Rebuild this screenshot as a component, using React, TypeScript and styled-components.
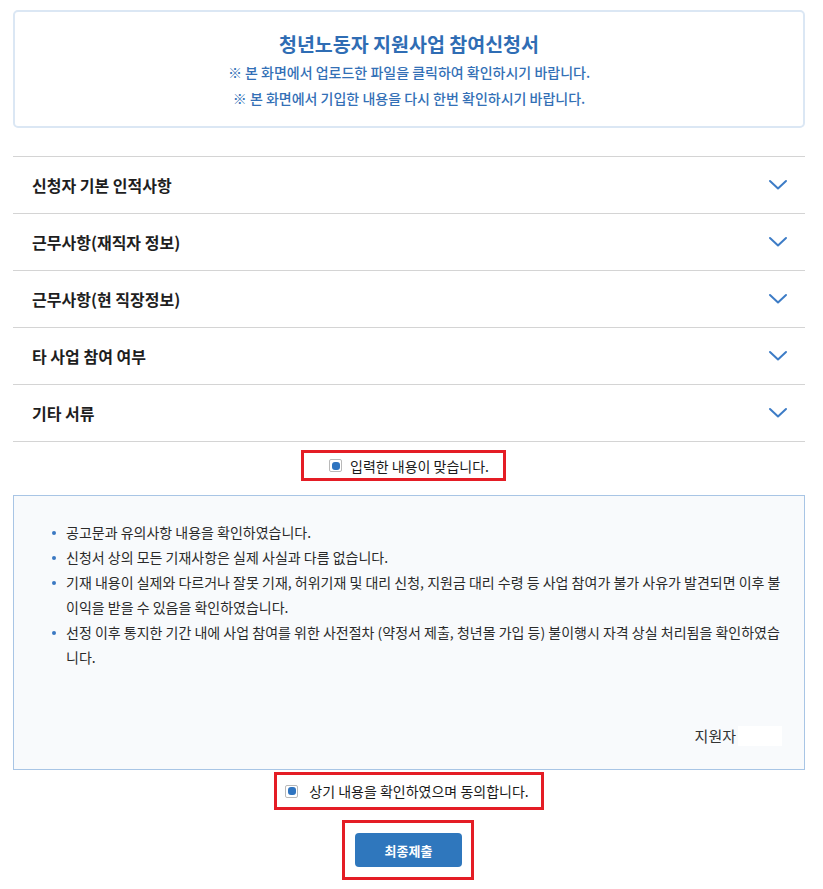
import React from 'react'
import styled, { createGlobalStyle } from 'styled-components'

const sections = [
  '신청자 기본 인적사항',
  '근무사항(재직자 정보)',
  '근무사항(현 직장정보)',
  '타 사업 참여 여부',
  '기타 서류',
]

const agreements = [
  '공고문과 유의사항 내용을 확인하였습니다.',
  '신청서 상의 모든 기재사항은 실제 사실과 다름 없습니다.',
  '기재 내용이 실제와 다르거나 잘못 기재, 허위기재 및 대리 신청, 지원금 대리 수령 등 사업 참여가 불가 사유가 발견되면 이후 불이익을 받을 수 있음을 확인하였습니다.',
  '선정 이후 통지한 기간 내에 사업 참여를 위한 사전절차 (약정서 제출, 청년몰 가입 등) 불이행시 자격 상실 처리됨을 확인하였습니다.',
]

const Chevron = () => (
  <svg width="20" height="12" viewBox="0 0 20 12" fill="none">
    <path d="M2 2 L10 9.5 L18 2" stroke="#3d7cc6" strokeWidth="2" strokeLinecap="round" strokeLinejoin="round" />
  </svg>
)

const App: React.FC = () => {
  return (
    <Page>
      <GlobalStyle />
      <Notice>
        <Title>청년노동자 지원사업 참여신청서</Title>
        <Sub>※ 본 화면에서 업로드한 파일을 클릭하여 확인하시기 바랍니다.</Sub>
        <Sub>※ 본 화면에서 기입한 내용을 다시 한번 확인하시기 바랍니다.</Sub>
      </Notice>

      <Accordion>
        {sections.map((s) => (
          <Row key={s}>
            <RowLabel>{s}</RowLabel>
            <Chevron />
          </Row>
        ))}
      </Accordion>

      <CheckLine shift={11}>
        <Marked padLeft={25} padRight={14} height={25}>
          <Check>
            <Dot />
          </Check>
          <CheckText>입력한 내용이 맞습니다.</CheckText>
        </Marked>
      </CheckLine>

      <AgreeBox>
        <List>
          {agreements.map((a) => (
            <Item key={a}>{a}</Item>
          ))}
        </List>
        <Sign>
          지원자
          <SignBlank />
        </Sign>
      </AgreeBox>

      <CheckLine top={2}>
        <Marked padLeft={8} padRight={12} height={32}>
          <Check>
            <Dot />
          </Check>
          <CheckText big>상기 내용을 확인하였으며 동의합니다.</CheckText>
        </Marked>
      </CheckLine>

      <CheckLine top={10} shift={2}>
        <Marked padLeft={10} padRight={9} height={54}>
          <Submit>최종제출</Submit>
        </Marked>
      </CheckLine>
    </Page>
  )
}

export default App

const GlobalStyle = createGlobalStyle`
  body {
    margin: 0;
    background: #fff;
    font-family: "Noto Sans CJK KR", "Noto Sans", sans-serif;
    color: #222;
  }
`

const Page = styled.div`
  width: 792px;
  padding: 10px 18px 9px 13px;
`

const Notice = styled.div`
  border: 2px solid #dbe7f4;
  border-radius: 5px;
  padding: 20px 0 15px;
  text-align: center;
`

const Title = styled.div`
  font-size: 19.5px;
  font-weight: 700;
  line-height: 24px;
  color: #2f6db4;
  margin-bottom: 3px;
`

const Sub = styled.div`
  font-size: 14px;
  font-weight: 500;
  line-height: 26px;
  color: #3370b6;
`

const Accordion = styled.div`
  margin-top: 28px;
  border-top: 1px solid #d4d4d4;
`

const Row = styled.div`
  display: flex;
  align-items: center;
  justify-content: space-between;
  height: 56px;
  padding: 0 17px 0 19px;
  border-bottom: 1px solid #d4d4d4;
`

const RowLabel = styled.span`
  font-size: 16px;
  font-weight: 700;
  color: #1e1e1e;
`

const CheckLine = styled.div<{ top?: number; shift?: number }>`
  display: flex;
  justify-content: center;
  margin-top: ${(p) => p.top ?? 8}px;
  padding-right: ${(p) => p.shift ?? 0}px;
`

const Marked = styled.div<{ padLeft: number; padRight: number; height: number }>`
  display: flex;
  align-items: center;
  justify-content: center;
  height: ${(p) => p.height}px;
  padding: 0 ${(p) => p.padRight}px 0 ${(p) => p.padLeft}px;
  border: 3px solid #e41d25;
`

const Check = styled.span`
  display: flex;
  align-items: center;
  justify-content: center;
  width: 13px;
  height: 13px;
  box-sizing: border-box;
  border: 1px solid #b9b9b9;
  border-radius: 2px;
  background: #fff;
  margin-right: 8px;
`

const Dot = styled.span`
  width: 8px;
  height: 8px;
  border-radius: 3px;
  background: #2f74c0;
`

const CheckText = styled.span<{ big?: boolean }>`
  font-size: 14px;
  color: #1a1a1a;
  margin-left: ${(p) => (p.big ? 3 : 0)}px;
`

const AgreeBox = styled.div`
  margin-top: 14px;
  border: 1px solid #a8c5e5;
  background: #f8fafc;
  padding: 24px 22px 23px 0;
`

const List = styled.ul`
  margin: 0;
  padding: 0 0 0 38px;
  list-style: none;
`

const Item = styled.li`
  position: relative;
  padding-left: 14px;
  font-size: 14px;
  line-height: 25px;
  color: #2a2a2a;
  word-break: break-all;

  &::before {
    content: '';
    position: absolute;
    left: 0;
    top: 11px;
    width: 4px;
    height: 4px;
    border-radius: 50%;
    background: #3a78c2;
  }
`

const Sign = styled.div`
  display: flex;
  justify-content: flex-end;
  align-items: center;
  margin-top: 55px;
  font-size: 15px;
  color: #333;
`

const SignBlank = styled.span`
  width: 44px;
  height: 20px;
  margin-left: 2px;
  background: #fff;
`

const Submit = styled.button`
  width: 107px;
  height: 34px;
  border: none;
  border-radius: 4px;
  background: #2f77bd;
  color: #fff;
  font-family: inherit;
  font-size: 13px;
  font-weight: 700;
`
